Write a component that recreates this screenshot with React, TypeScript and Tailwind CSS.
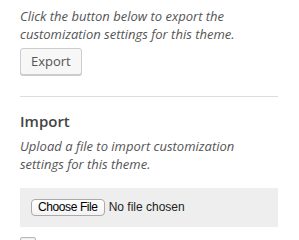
import React from 'react';

const App: React.FC = () => {
  return (
    <div className="w-[299px] h-[240px] overflow-hidden bg-white pl-5 pr-[21px] font-['Open_Sans',sans-serif]">
      {/* Export */}
      <p className="pt-[7px] text-[13px] leading-[18px] italic text-[#555]">
        Click the button below to export the customization settings for this theme.
      </p>
      <button className="mt-[5px] h-[27px] px-[10px] rounded-[3px] border border-[#ccc] bg-[#f7f7f7] text-[13px] text-[#555] shadow-[0_1px_0_#ccc]">
        Export
      </button>

      <hr className="mt-[21px] border-0 border-t border-[#ddd]" />

      {/* Import */}
      <h3 className="mt-[14px] text-[15px] leading-[20px] font-semibold text-[#444]">Import</h3>
      <p className="mt-[6px] text-[13px] leading-[18px] italic text-[#555]">
        Upload a file to import customization settings for this theme.
      </p>

      <div className="mt-[15px] h-[39px] bg-[#eee] pl-[11px] pt-[11px] flex items-start gap-[4px] font-['Liberation_Sans',Arial,sans-serif]">
        <button className="h-[17px] px-[6px] rounded-[4px] border border-[#aaa] bg-gradient-to-b from-white to-[#f3f3f3] text-[12px] leading-[15px] tracking-[-0.4px] text-black">
          Choose File
        </button>
        <span className="text-[12px] leading-[17px] text-[#222]">No file chosen</span>
      </div>

      <label className="mt-[10px] flex items-start gap-2">
        <span className="w-[16px] h-[16px] shrink-0 border border-[#b4b9be] bg-white rounded-[2px] shadow-[inset_0_1px_2px_rgba(0,0,0,0.1)]" />
        <span className="text-[13px] leading-[18px] text-[#ddd]">Download and import file attachments?</span>
      </label>
    </div>
  );
};

export default App;
